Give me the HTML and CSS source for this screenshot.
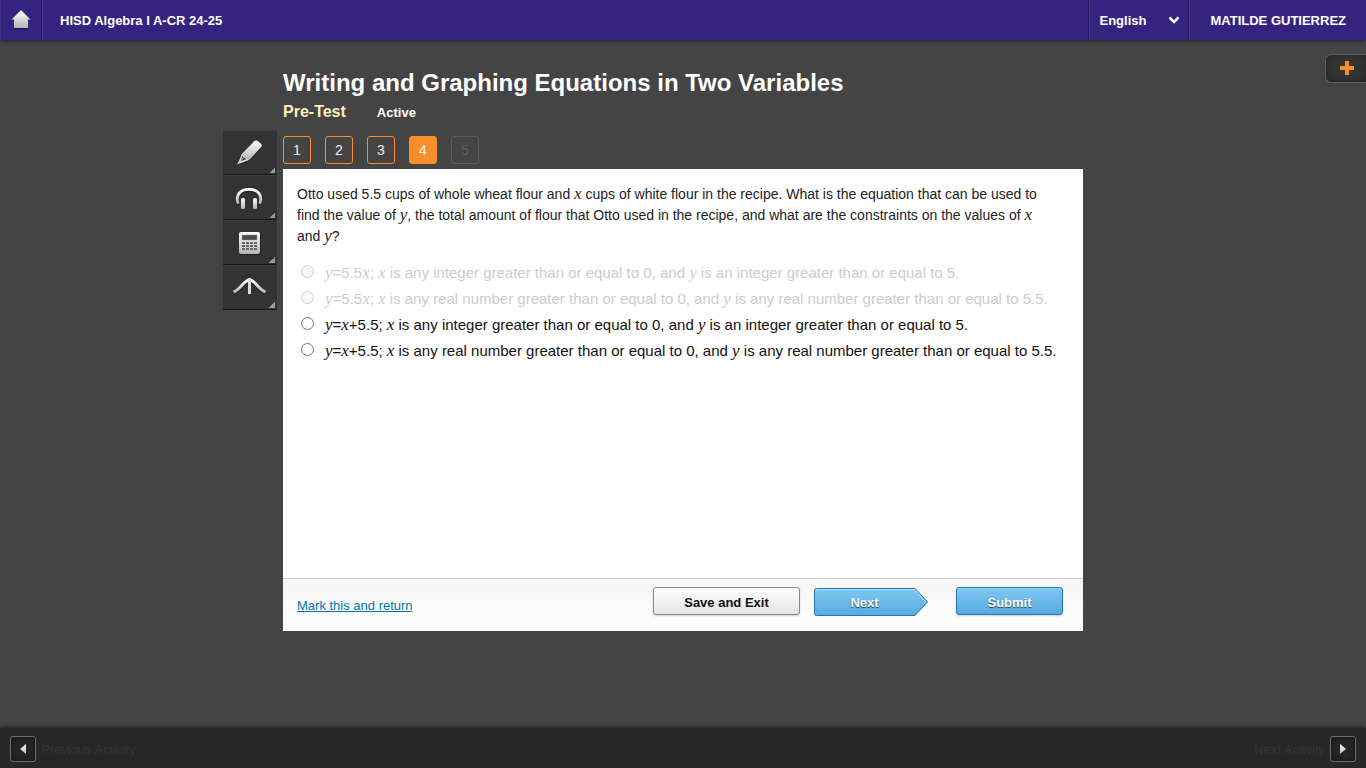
FILE: index.html
```html
<!DOCTYPE html>
<html lang="en">
<head>
<meta charset="utf-8">
<title>Writing and Graphing Equations in Two Variables</title>
<meta name="viewport" content="width=device-width, initial-scale=1">
<link rel="stylesheet" href="styles.css">
</head>
<body>
<header class="topbar">
  <a class="home" href="#" aria-label="Home">
    <svg width="20" height="20" viewBox="0 0 20 20" aria-hidden="true">
      <defs><linearGradient id="silver" x1="0" y1="0" x2="0" y2="1"><stop offset="0" stop-color="#fff"/><stop offset="1" stop-color="#b4b4b4"/></linearGradient></defs>
      <path d="M10 2 1 11H3V19.500H17V11H19Z" fill="#20164f"/>
      <path d="M10 0 .5 9.500H3V18H17V9.500H19.500Z" fill="url(#silver)"/>
    </svg>
  </a>
  <a class="course" href="#">HISD Algebra I A-CR 24-25</a>
  <div class="language">
    <select class="language-select" aria-label="Language"><option>English</option><option>Spanish</option></select>
    <svg class="chevron" width="12" height="8" viewBox="0 0 12 8" aria-hidden="true"><path d="M1.500 1.500 6 6 10.500 1.500" fill="none" stroke="#fff" stroke-width="2.500"/></svg>
  </div>
  <a class="user" href="#">MATILDE GUTIERREZ</a>
</header>

<button class="expand" type="button" aria-label="Open panel">
  <svg width="14" height="14" viewBox="0 0 14 14" aria-hidden="true"><path d="M5 0H9V5H14V9H9V14H5V9H0V5H5Z" fill="#f98e2b"/></svg>
</button>

<main class="stage">
  <nav class="tools" aria-label="Tools">
    <button class="tool" type="button" aria-label="Highlighter">
      <svg width="34" height="30" viewBox="0 0 34 30" aria-hidden="true">
        <path d="M9.500 19 22 6 29 11 16.500 25.500 5 29Z" fill="#1f1f1f"/>
        <path d="M9 17.800 21.300 5.200Q23 3.800 24.800 5L28 7.800Q29.500 9.300 28.200 11L16.300 24Z" fill="url(#silver)"/>
        <path d="M9 17.800 16.300 24 4.500 28.300Z" fill="#dedede"/>
        <path d="M9.500 20 13.300 23.200 7.300 25.200Z" fill="#3a3a3a"/>
        <path d="M4.500 28.300 10.500 21.500" stroke="#d5d5d5"/>
      </svg>
    </button>
    <button class="tool" type="button" aria-label="Read aloud">
      <svg width="34" height="30" viewBox="0 0 34 30" aria-hidden="true">
        <path d="M5.300 24C1.500 15 7.500 9.500 16 9.500S30.500 15 26.700 24" fill="none" stroke="#1f1f1f" stroke-width="3"/>
        <path d="M5.300 22.800C1.800 14 7.500 8.300 16 8.300S30.200 14 26.700 22.800" fill="none" stroke="url(#silver)" stroke-width="2.800"/>
        <rect x="8" y="17" width="4" height="11" rx="1.500" fill="url(#silver)"/>
        <rect x="20" y="17" width="4" height="11" rx="1.500" fill="url(#silver)"/>
      </svg>
    </button>
    <button class="tool" type="button" aria-label="Calculator">
      <svg width="34" height="30" viewBox="0 0 34 30" aria-hidden="true">
        <rect x="6" y="8" width="22" height="21" rx="2" fill="#1f1f1f"/>
        <rect x="6" y="6" width="21" height="22" rx="2" fill="url(#silver)"/>
        <path d="M9 9H24V14H9Z" fill="#4b4b4b" stroke="#999" stroke-width=".5"/>
        <path d="M9 17H24M9 20H24M9 23H24" stroke="#666" stroke-width="2" stroke-dasharray="3 1"/>
      </svg>
    </button>
    <button class="tool" type="button" aria-label="Graphing">
      <svg width="34" height="30" viewBox="0 0 34 30" aria-hidden="true">
        <path d="M.5 22.500C8 19 11 10 16.500 10S25 19 32.500 22.500" fill="none" stroke="#1c1c1c" stroke-width="3"/>
        <path d="M.5 21C8 18 11 9 16.500 9S25 18 32.500 21" fill="none" stroke="url(#silver)" stroke-width="3"/>
        <path d="M16.500 7V23" stroke="#ddd" stroke-width="3"/>
      </svg>
    </button>
  </nav>

  <div class="activity">
    <h1 class="title">Writing and Graphing Equations in Two Variables</h1>
    <div class="status"><h2 class="kind">Pre-Test</h2><span class="state">Active</span></div>
    <nav class="steps" aria-label="Questions">
      <button class="step" type="button">1</button>
      <button class="step" type="button">2</button>
      <button class="step" type="button">3</button>
      <button class="step current" type="button" aria-current="step">4</button>
      <button class="step" type="button" disabled>5</button>
    </nav>

    <form class="card">
      <div class="question">
        <p class="prompt">Otto used 5.5 cups of whole wheat flour and <i>x</i> cups of white flour in the recipe. What is the equation that can be used to<br>find the value of <i>y</i>, the total amount of flour that Otto used in the recipe, and what are the constraints on the values of <i>x</i><br>and <i>y</i>?</p>
        <div class="answers">
          <div class="answer"><input class="radio" type="radio" name="a" id="a1" disabled><label for="a1"><i>y</i>=5.5<i>x</i>; <i>x</i> is any integer greater than or equal to 0, and <i>y</i> is an integer greater than or equal to 5.</label></div>
          <div class="answer"><input class="radio" type="radio" name="a" id="a2" disabled><label for="a2"><i>y</i>=5.5<i>x</i>; <i>x</i> is any real number greater than or equal to 0, and <i>y</i> is any real number greater than or equal to 5.5.</label></div>
          <div class="answer"><input class="radio" type="radio" name="a" id="a3"><label for="a3"><i>y</i>=<i>x</i>+5.5; <i>x</i> is any integer greater than or equal to 0, and <i>y</i> is an integer greater than or equal to 5.</label></div>
          <div class="answer"><input class="radio" type="radio" name="a" id="a4"><label for="a4"><i>y</i>=<i>x</i>+5.5; <i>x</i> is any real number greater than or equal to 0, and <i>y</i> is any real number greater than or equal to 5.5.</label></div>
        </div>
      </div>
      <div class="actions">
        <a class="mark" href="#">Mark this and return</a>
        <button class="button save" type="button">Save and Exit</button>
        <button class="next" type="button">
          <svg class="arrow" width="115" height="29" viewBox="0 0 115 29" aria-hidden="true">
            <defs><linearGradient id="sky" x1="0" y1="0" x2="0" y2="1"><stop offset="0" stop-color="#7fc8f0"/><stop offset="1" stop-color="#55abdf"/></linearGradient></defs>
            <path d="M2.500 .5H101L113.500 14 101 27.500H2.500Q.5 27.500 .5 25.500V2.500Q.5 .5 2.500 .5Z" fill="url(#sky)" stroke="#2874ad"/>
            <path d="M2 1.500H100.500L112 14" fill="none" stroke="#b1e0f9"/>
          </svg>
          <span class="next-label">Next</span>
        </button>
        <button class="button submit" type="submit">Submit</button>
      </div>
    </form>
  </div>
</main>

<footer class="bottombar">
  <div class="pager"><button class="pager-button" type="button" id="prev" aria-label="Previous Activity"><svg width="6" height="10" viewBox="0 0 6 10" aria-hidden="true"><path d="M6 0V10L0 5Z" fill="url(#silver)"/></svg></button><label for="prev">Previous Activity</label></div>
  <div class="pager"><label for="next">Next Activity</label><button class="pager-button" type="button" id="next" aria-label="Next Activity"><svg width="6" height="10" viewBox="0 0 6 10" aria-hidden="true"><path d="M0 0V10L6 5Z" fill="url(#silver)"/></svg></button></div>
</footer>
</body>
</html>
```
FILE: styles.css
```css
* { box-sizing: border-box; }
body {
  margin: 0;
  min-height: 100vh;
  display: flex;
  flex-direction: column;
  position: relative;
  background: #444;
  color: #222;
  font: 13px/16px "Liberation Sans", Arial, sans-serif;
}
button { font: inherit; padding: 0; cursor: pointer; }
svg { display: block; flex: none; }

.topbar {
  display: flex;
  height: 40px;
  background: #35247f;
  color: #fff;
  font-weight: bold;
  box-shadow: 0 1px 4px #222;
}
.topbar a { color: inherit; text-decoration: none; display: flex; align-items: center; }
.home { width: 42px; justify-content: center; border-right: 1px solid #281a66; border-left: 1px solid #44358b; }
.course { flex: 1; padding: 2px 0 0 17px; border-left: 1px solid #44358b; }
.language { display: flex; position: relative; width: 101px; border-left: 1px solid #281a66; border-right: 1px solid #281a66; box-shadow: inset 1px 0 #44358b; }
.language-select { appearance: none; width: 100%; padding: 2px 11px 0 10px; border: 0; background: transparent; color: #fff; font: inherit; }
.language-select option { color: #222; }
.chevron { position: absolute; right: 8px; top: 16px; pointer-events: none; }
.topbar .user { padding: 2px 20px 0; border-left: 1px solid #44358b; }

.expand {
  position: absolute;
  top: 54px;
  right: 0;
  display: flex;
  align-items: center;
  width: 41px;
  height: 29px;
  padding: 0 0 2px 14px;
  border: 1px solid #53606d;
  border-right: 0;
  border-radius: 6px 0 0 6px;
  background: #333;
  box-shadow: inset 0 0 6px #222;
}

.stage { flex: 1; display: grid; grid-template-columns: 1fr minmax(0, 800px) 1fr; padding: 28px 0 24px; }
.tools { justify-self: end; padding: 62px 6px 0 0; }
.tool {
  display: flex;
  align-items: center;
  justify-content: center;
  width: 54px;
  height: 45px;
  padding-bottom: 3px;
  border: 0;
  border-top: 1px solid #3d3d3d;
  border-bottom: 1px solid #161616;
  background: linear-gradient(135deg, transparent 50%, #999 50%) right 2px bottom 1px / 6px 6px no-repeat, #333;
}
.title { margin: 0; color: #fff; font-size: 24px; line-height: 30px; }
.status { display: flex; align-items: center; gap: 31px; height: 28px; }
.kind { margin: 0; color: #ffedbb; font-size: 16px; line-height: 20px; }
.state { color: #fff; font-weight: bold; padding-top: 2px; }
.steps { display: flex; gap: 14px; padding: 10px 0 5px; }
.step { width: 28px; height: 28px; border: 1px solid #f98e2b; border-radius: 3px; background: transparent; color: #eee; font-size: 14px; }
.step.current { background: #f98e2b; }
.step:disabled { border-color: #5c5c5c; color: #5c5c5c; }

.card { display: flex; flex-direction: column; min-height: 462px; background: #fff; }
.question { flex: 1; padding: 15px 14px 24px; font-size: 15px; line-height: 21px; }
.question i { font-family: "Liberation Serif", "Times New Roman", serif; font-size: 17px; line-height: 1; }
.prompt { margin: 0 0 15px; font-size: 14px; }
.answer { display: flex; align-items: flex-start; gap: 11px; min-height: 26px; padding-left: 4px; color: #111; }
.answer:has(:disabled) { color: #ccc; }
.radio { width: 13px; height: 13px; margin: 3px 0 0; flex: none; }

.actions {
  display: flex;
  align-items: flex-start;
  padding: 8px 20px 14px 14px;
  border-top: 1px solid #ccc;
  background: linear-gradient(#f5f5f5, #fff);
}
.mark { margin: 11px auto 0 0; color: #0076a8; }
.button { height: 28px; border-radius: 3px; font-weight: bold; padding-top: 3px; }
.save { width: 147px; border: 1px solid #888; background: linear-gradient(#fff, #e5e5e5); color: #111; box-shadow: 0 1px 2px #ccc; }
.next { position: relative; width: 115px; margin: 1px 27px 0 14px; border: 0; background: none; color: #fff; font-weight: bold; text-shadow: 0 1px 1px #245; }
.next-label { position: absolute; top: 7px; left: 0; width: 101px; }
.submit { width: 107px; border: 1px solid #2874ad; background: linear-gradient(#7fc8f0, #55abdf); color: #fff; text-shadow: 0 1px 1px #245; box-shadow: inset 0 1px #94d3f5, 0 1px 2px #ccc; }

.bottombar {
  display: flex;
  align-items: center;
  justify-content: space-between;
  height: 40px;
  padding: 2px 10px 0;
  background: #272727;
  color: #343434;
  box-shadow: 0 -1px 4px #222;
}
.pager { display: flex; align-items: center; gap: 5px; }
.pager label { padding-top: 2px; }
.pager-button { display: flex; align-items: center; justify-content: center; width: 26px; height: 26px; border: 1px solid #707070; border-radius: 3px; background: #252525; box-shadow: inset 0 0 5px #111; }
```
